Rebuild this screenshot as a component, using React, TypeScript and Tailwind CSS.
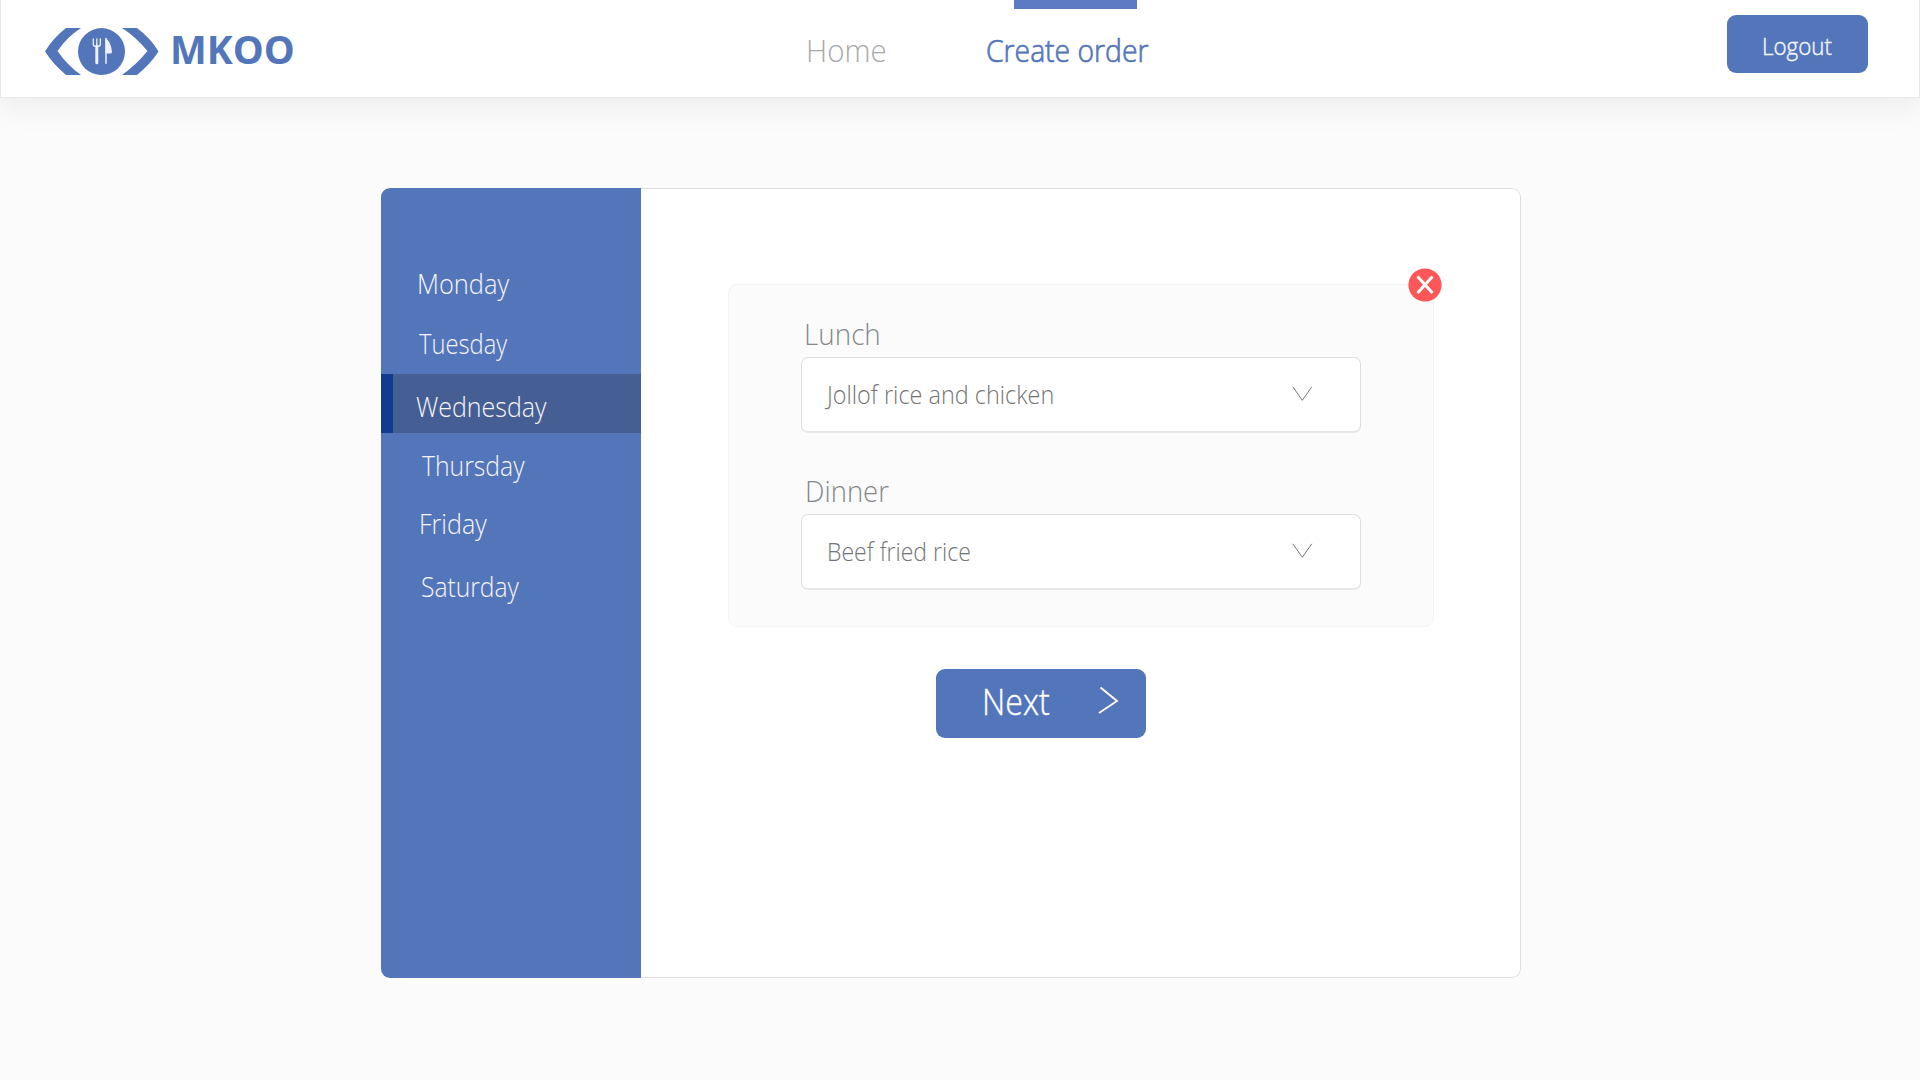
import React from 'react';

const days = [
  { name: 'Monday', cls: 'h-[62px] pt-[2px] pl-[36px]', text: 'scale-x-[0.941]' },
  { name: 'Tuesday', cls: 'h-[60px] pl-[38px]', text: 'scale-x-[0.88]' },
  { name: 'Wednesday', cls: 'h-[59px] pt-[6px] pl-[23px] border-l-[12px] border-[#123b8f] bg-[#455f94]', text: 'scale-x-[0.925]' },
  { name: 'Thursday', cls: 'h-[57px] pt-[8px] pl-[41px]', text: 'scale-x-[0.916]' },
  { name: 'Friday', cls: 'h-[61px] pt-[6px] pl-[38px]', text: 'scale-x-[0.929]' },
  { name: 'Saturday', cls: 'h-[60px] pt-[12px] pl-[40px]', text: 'scale-x-[0.912]' },
];

function Logo() {
  return (
    <svg width="116" height="50" viewBox="0 0 116 50" className="shrink-0">
      <path d="M21 2H36Q22 11 12.500 25Q22 39 36 49H21Q8 38 0 25.500Q8 12 21 2Z" fill="#5376ba" />
      <path d="M92 2H77Q91 11 102.500 25Q91 39 77 49H92Q105.500 38 113.500 25.500Q105.500 12 92 2Z" fill="#5376ba" />
      <circle cx="56.500" cy="25.600" r="23.500" fill="#5376ba" />
      <g stroke="#edf1f9" fill="none" strokeLinecap="round">
        <path d="M48.300 13V18.500Q48.300 20.500 51.800 20.500Q55.300 20.500 55.300 18.500V13M51.800 13V20" strokeWidth="1.300" />
        <path d="M51.800 20V36.700" strokeWidth="3" />
        <path d="M61 12.500V37.300" strokeWidth="1.500" />
      </g>
      <path d="M60.500 12Q66 15.500 67 26Q67 27.500 65.500 27.500H60.500Z" fill="#edf1f9" />
    </svg>
  );
}

function Field({ label, value, labelCls, valueCls }: { label: string; value: string; labelCls: string; valueCls: string }) {
  return (
    <div className="flex flex-col">
      <div className={`w-fit origin-left text-[30px] leading-[40px] font-light text-[#84888b] ${labelCls}`}>{label}</div>
      <div className="mt-[3px] flex h-[76px] w-[560px] items-center justify-between rounded-[7px] border border-b-2 border-[#dedede] border-b-[#e8e8e8] bg-white pr-[47px] pl-[25px]">
        <span className={`-mt-[2px] origin-left whitespace-nowrap text-[25.5px] leading-[34px] font-light text-[#747474] ${valueCls}`}>{value}</span>
        <svg width="21" height="16" viewBox="0 0 21 16" className="-mt-[2px]">
          <path d="M.8.8L10.300 14.300L19.800.8" fill="none" stroke="#777" strokeWidth="1" />
        </svg>
      </div>
    </div>
  );
}

export default function App() {
  return (
    <div className="flex h-[1080px] w-[1920px] flex-col overflow-hidden bg-[#fbfbfb] font-['Open_Sans',sans-serif]">
      <header className="flex h-[98px] shrink-0 items-start border border-t-0 border-[#e9e9e9] bg-white shadow-[0_10px_30px_rgba(0,0,0,0.06)]">
        <div className="flex w-[805px] items-start pt-[26px] pl-[44px]">
          <Logo />
          <span className="-mt-[2px] ml-[9px] text-[39px] leading-[50px] font-bold text-[#5376ba]">MKOO</span>
        </div>
        <nav className="flex w-[921px] items-start text-[31px] leading-[40px]">
          <span className="mt-[30px] w-[180px] origin-left scale-x-[0.949] font-light text-[#a8a8a8]">Home</span>
          <div className="flex flex-col">
            <span className="ml-[28px] h-[9px] w-[123px] bg-[#5c7bc4]" />
            <span className="mt-[21px] w-fit origin-left scale-x-[0.913] whitespace-nowrap font-light text-[#5376ba] [-webkit-text-stroke:0.7px_#5376ba]">Create order</span>
          </div>
        </nav>
        <button className="mt-[15px] flex h-[58px] w-[141px] items-start rounded-[9px] bg-[#5376ba] pt-[13px] pl-[35px] text-[24px] leading-[36px] font-light text-[#f4f6fb] [-webkit-text-stroke:0.4px_#f4f6fb]">
          <span className="origin-left scale-x-[0.93]">Logout</span>
        </button>
      </header>

      <main className="mt-[90px] ml-[381px] flex h-[790px] w-[1140px] shrink-0 overflow-hidden rounded-[9px] bg-white">
        <aside className="flex w-[260px] shrink-0 flex-col bg-[#5376ba] pt-[64px]">
          {days.map((d) => (
            <div key={d.name} className={`flex items-center text-[27px] leading-[36px] font-light text-[#f8f5fa] ${d.cls}`}>
              <span className={`origin-left ${d.text}`}>{d.name}</span>
            </div>
          ))}
        </aside>
        <section className="flex flex-1 flex-col rounded-r-[9px] border border-l-0 border-[#dedede] pt-[95px] pl-[87px]">
          <div className="relative flex h-[343px] w-[706px] shrink-0 flex-col gap-[38px] rounded-[9px] border border-[#f4f4f4] bg-[#fbfbfb] pt-[29px] pl-[72px]">
            <Field label="Lunch" value="Jollof rice and chicken" labelCls="ml-[3px] scale-x-[0.928]" valueCls="scale-x-[0.919]" />
            <Field label="Dinner" value="Beef fried rice" labelCls="ml-[4px] scale-x-[0.917]" valueCls="scale-x-[0.903]" />
            <svg width="34" height="34" viewBox="0 0 34 34" className="absolute -top-[17px] -right-[9px]">
              <circle cx="17" cy="17" r="16.600" fill="#ff5757" />
              <path d="M9.500 8.500L24.500 25M24.500 8.500L9.500 25" stroke="#fff" strokeWidth="3" />
            </svg>
          </div>
          <button className="mt-[42px] ml-[208px] flex h-[69px] w-[210px] items-start rounded-[9px] bg-[#5376ba] pt-[9px] pl-[46px] text-[36px] leading-[48px] font-light text-white [-webkit-text-stroke:0.4px_#ffffff]">
            <span className="w-[115px] origin-left scale-x-[0.894] text-left">Next</span>
            <svg width="22" height="30" viewBox="0 0 22 30" className="mt-[8px]">
              <path d="M3.500 1.500L20 15L2 27" fill="none" stroke="#fff" strokeWidth="1.900" />
            </svg>
          </button>
        </section>
      </main>
    </div>
  );
}
